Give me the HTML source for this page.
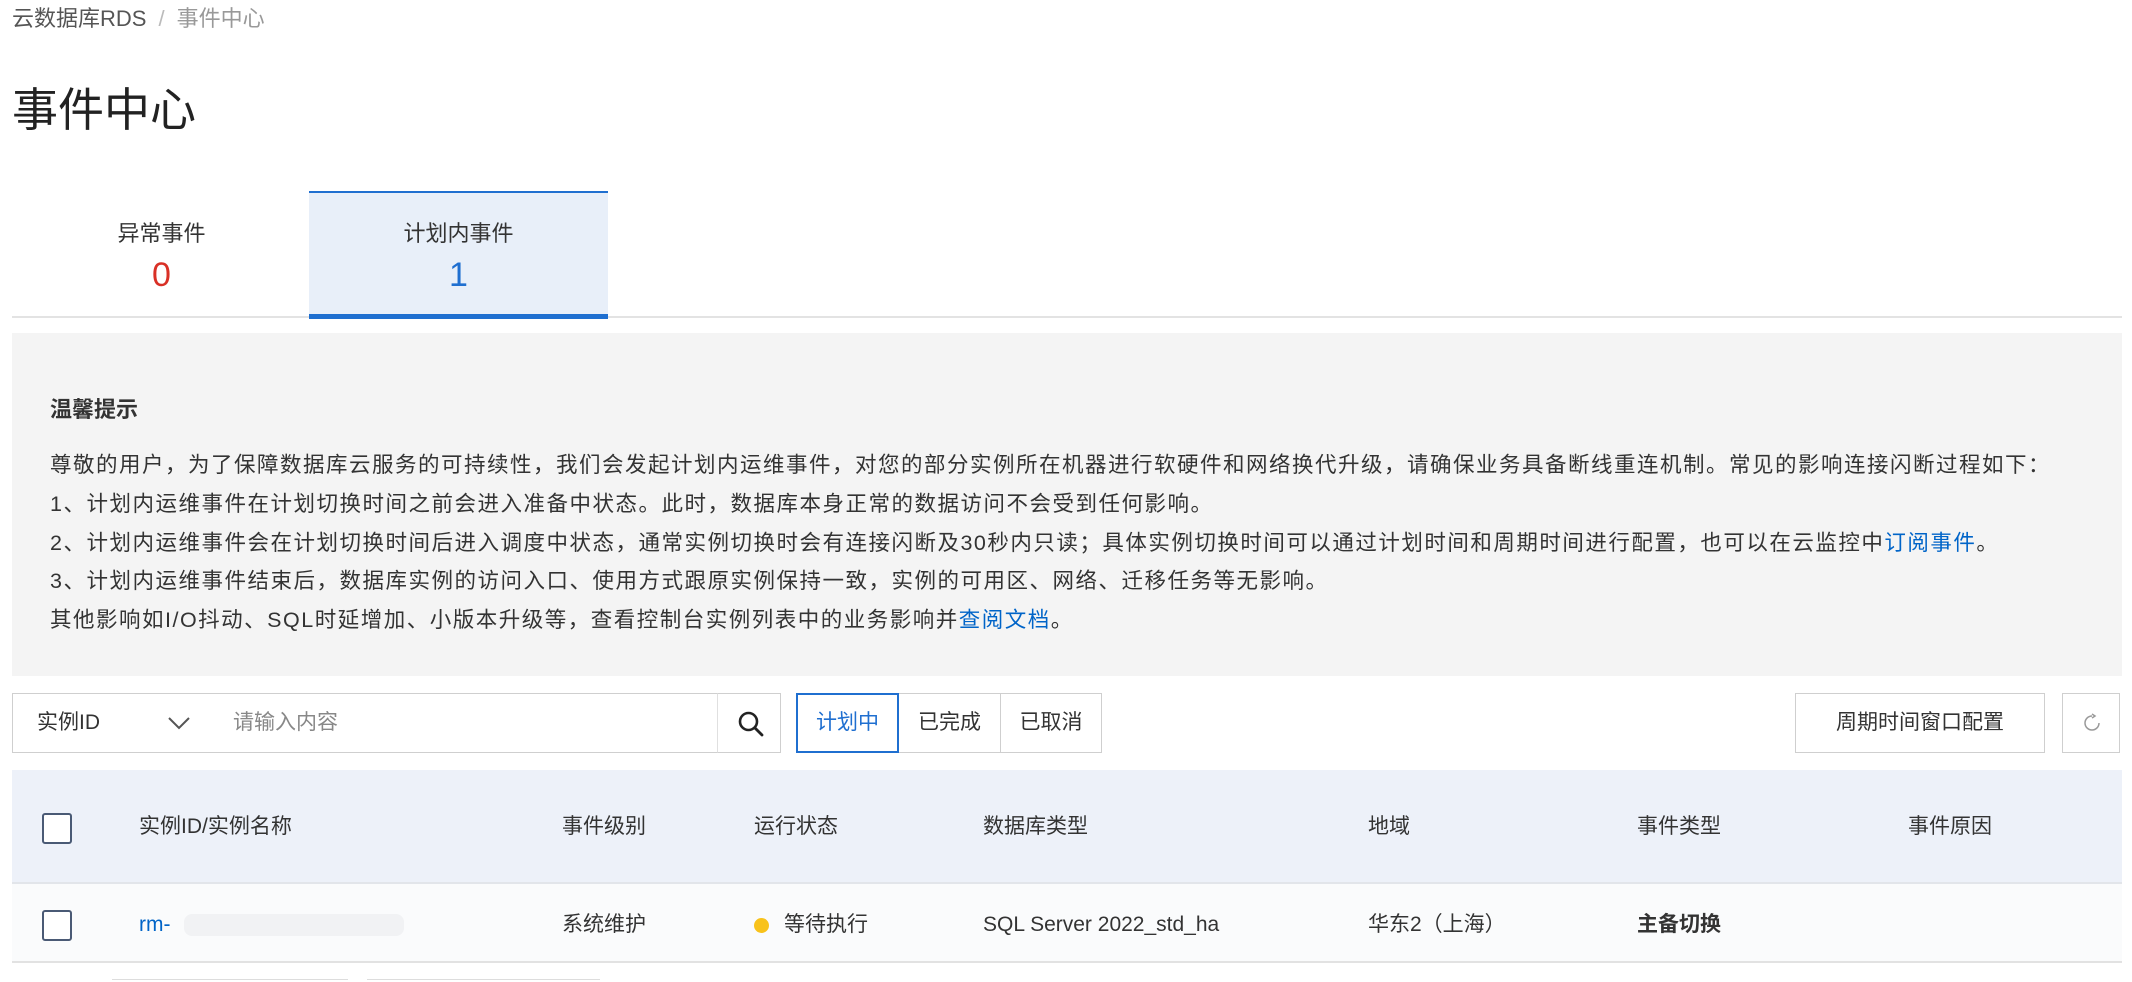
<!DOCTYPE html>
<html><head><meta charset="utf-8"><style>
*{box-sizing:border-box;margin:0;padding:0}
body{width:2132px;height:982px;overflow:hidden;background:#fff;font-family:"Liberation Sans","Noto Sans CJK SC",sans-serif;color:#333;position:relative}
.a{position:absolute;white-space:nowrap}
.bc{top:4px;left:12px;font-size:22px;color:#555;line-height:30px}
.bc span{color:#bbb;margin:0 12px}
.bc em{font-style:normal;color:#999}
.title{top:82px;left:12px;font-size:46px;line-height:56px;color:#222}
.tab{position:absolute;top:191px;height:127px;width:299px;text-align:center}
.tab .l{position:absolute;top:26px;left:0;right:0;font-size:22px;line-height:34px;color:#333}
.tab .n{position:absolute;top:62px;left:0;right:0;font-size:34px;line-height:44px}
.line{position:absolute;left:12px;width:2110px;top:316px;height:2px;background:#e3e3e3}
.box{position:absolute;left:12px;top:333px;width:2110px;height:343px;background:#f4f4f4}
.box .h{position:absolute;left:38px;top:62px;font-size:22px;font-weight:bold;color:#333;line-height:30px}
.box .p{position:absolute;left:38px;top:113px;font-size:21.5px;line-height:38.8px;color:#333;letter-spacing:1.5px;white-space:nowrap}
a{color:#0064c8;text-decoration:none}
.bd{position:absolute;border:1px solid #cfcfcf;background:#fff;font-size:21px;line-height:58px;height:60px;top:693px}
.th{position:absolute;top:770px;left:12px;width:2110px;height:114px;background:#edf1f9;border-bottom:2px solid #e2e5ea}
.tr{position:absolute;top:884px;left:12px;width:2110px;height:79px;background:#fafbfc;border-bottom:2px solid #e2e2e2}
.cb{position:absolute;width:30px;height:31px;border:2px solid #4a5a75;border-radius:3px;background:#fff}
.c{position:absolute;font-size:21px;line-height:30px;color:#333}
</style></head><body>
<div class="a bc">云数据库RDS<span>/</span><em>事件中心</em></div>
<div class="a title">事件中心</div>
<div class="tab" style="left:12px"><div class="l">异常事件</div><div class="n" style="color:#d93026">0</div></div>
<div class="tab" style="left:309px;background:#e8eff9;border-top:2px solid #1f6fd0"><div class="l" style="top:24px">计划内事件</div><div class="n" style="top:60px;color:#1f6fd0">1</div></div>
<div class="line"></div>
<div style="position:absolute;left:309px;top:314px;width:299px;height:5px;background:#1f6fd0"></div>
<div class="box">
<div class="h">温馨提示</div>
<div class="p">尊敬的用户，为了保障数据库云服务的可持续性，我们会发起计划内运维事件，对您的部分实例所在机器进行软硬件和网络换代升级，请确保业务具备断线重连机制。常见的影响连接闪断过程如下：<br>1、计划内运维事件在计划切换时间之前会进入准备中状态。此时，数据库本身正常的数据访问不会受到任何影响。<br>2、计划内运维事件会在计划切换时间后进入调度中状态，通常实例切换时会有连接闪断及30秒内只读；具体实例切换时间可以通过计划时间和周期时间进行配置，也可以在云监控中<a>订阅事件</a>。<br>3、计划内运维事件结束后，数据库实例的访问入口、使用方式跟原实例保持一致，实例的可用区、网络、迁移任务等无影响。<br>其他影响如I/O抖动、SQL时延增加、小版本升级等，查看控制台实例列表中的业务影响并<a>查阅文档</a>。</div>
</div>
<div class="bd" style="left:12px;width:196px;padding-left:24px">实例ID
<svg style="position:absolute;right:16px;top:22px" width="24" height="14" viewBox="0 0 24 14"><path d="M2 2 L12 12 L22 2" fill="none" stroke="#555" stroke-width="2"/></svg></div>
<div class="bd" style="left:207px;width:511px;padding-left:26px;color:#888;border-left:none">请输入内容</div>
<div class="bd" style="left:717px;width:64px;border-left:1px solid #e0e0e0"><svg style="position:absolute;left:19px;top:16px" width="28" height="28" viewBox="0 0 28 28"><circle cx="11.5" cy="11.5" r="8.5" fill="none" stroke="#222" stroke-width="2.6"/><path d="M18 18 L25 25" stroke="#222" stroke-width="2.8" stroke-linecap="round"/></svg></div>
<div class="bd" style="left:796px;width:103px;text-align:center;color:#1f6fd0;border:2px solid #1f6fd0;line-height:56px;z-index:2">计划中</div>
<div class="bd" style="left:898px;width:103px;text-align:center">已完成</div>
<div class="bd" style="left:1000px;width:102px;text-align:center">已取消</div>
<div class="bd" style="left:1795px;width:250px;text-align:center">周期时间窗口配置</div>
<div class="bd" style="left:2062px;width:58px"><svg style="position:absolute;left:19px;top:19px" width="20" height="20" viewBox="0 0 20 20"><path d="M10 3 A7 7 0 1 0 17 10" fill="none" stroke="#999" stroke-width="1.5"/><path d="M10 1 L13 3 L10 5" fill="none" stroke="#999" stroke-width="1.5"/></svg></div>
<div class="th"></div>
<div class="cb" style="left:42px;top:813px"></div>
<div class="c" style="left:139px;top:812px">实例ID/实例名称</div>
<div class="c" style="left:562px;top:812px">事件级别</div>
<div class="c" style="left:754px;top:812px">运行状态</div>
<div class="c" style="left:983px;top:812px">数据库类型</div>
<div class="c" style="left:1368px;top:812px">地域</div>
<div class="c" style="left:1637px;top:812px">事件类型</div>
<div class="c" style="left:1908px;top:812px">事件原因</div>
<div class="tr"></div>
<div class="cb" style="left:42px;top:910px"></div>
<div class="c" style="left:139px;top:910px;color:#0064c8">rm-</div>
<div style="position:absolute;left:184px;top:914px;width:220px;height:22px;background:#f1f2f4;border-radius:8px"></div>
<div class="c" style="left:562px;top:910px">系统维护</div>
<div style="position:absolute;left:754px;top:918px;width:15px;height:15px;border-radius:50%;background:#f8c21b"></div>
<div class="c" style="left:784px;top:910px">等待执行</div>
<div class="c" style="left:983px;top:910px">SQL Server 2022_std_ha</div>
<div class="c" style="left:1368px;top:910px">华东2（上海）</div>
<div class="c" style="left:1637px;top:910px;font-weight:bold">主备切换</div>
<div style="position:absolute;left:112px;top:979px;width:236px;height:3px;border-top:1px solid #ddd"></div>
<div style="position:absolute;left:367px;top:979px;width:233px;height:3px;border-top:1px solid #ddd"></div>
</body></html>
